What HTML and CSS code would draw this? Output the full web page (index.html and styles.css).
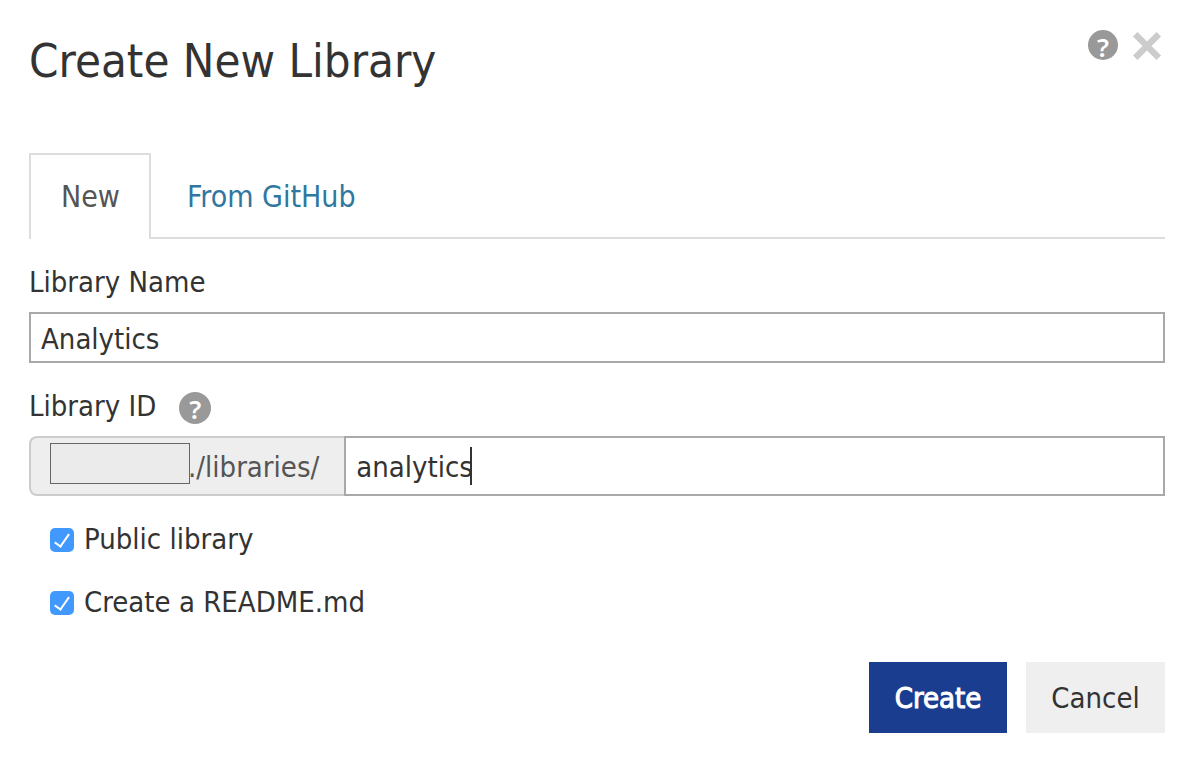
FILE: index.html
```html
<!DOCTYPE html>
<html lang="en">
<head>
<meta charset="utf-8">
<meta name="viewport" content="width=device-width, initial-scale=1">
<title>Create New Library</title>
<link rel="stylesheet" href="styles.css">
</head>
<body>
<main class="dialog">
  <header class="dialog-header">
    <h1 class="title">Create New Library</h1>
    <div class="header-actions">
      <button class="help" type="button" aria-label="Help">?</button>
      <button class="close" type="button" aria-label="Close">
        <svg class="close-icon" viewBox="0 0 28 28" aria-hidden="true"><path d="M3 3L25 25M25 3L3 25"/></svg>
      </button>
    </div>
  </header>
  <nav class="tabs">
    <a class="tab tab-active" href="#new">New</a>
    <a class="tab" href="#github">From GitHub</a>
  </nav>
  <form class="form">
    <div class="label-row"><label for="name">Library Name</label></div>
    <input class="field" id="name" type="text" value="Analytics">
    <div class="label-row">
      <label for="library-id">Library ID</label>
      <button class="help help-large" type="button" aria-label="About the library ID">?</button>
    </div>
    <div class="id-group">
      <span class="prefix"><span class="redacted"></span><span class="path">./libraries/</span></span>
      <div class="id-entry">
        <input class="field field-id" id="library-id" type="text" value="analytics">
        <span class="caret"></span>
      </div>
    </div>
    <div class="options">
      <label class="option"><input class="check" type="checkbox" checked>Public library</label>
      <label class="option"><input class="check" type="checkbox" checked>Create a README.md</label>
    </div>
    <div class="actions">
      <button class="button button-primary" type="button">Create</button>
      <button class="button" type="button">Cancel</button>
    </div>
  </form>
</main>
</body>
</html>
```
FILE: styles.css
```css
* { box-sizing: border-box; }

body {
  margin: 0;
  background: #fff;
  color: #333;
  font: 29px/36px Tahoma, "DejaVu Sans Condensed", "DejaVu Sans", sans-serif;
}

button, input { font: inherit; color: inherit; }
button { border: 0; padding: 0; cursor: pointer; }

.dialog { padding: 30px 21px 27px 29px; }

.dialog-header {
  display: flex;
  justify-content: space-between;
  align-items: flex-start;
}

.title {
  margin: 0;
  font-size: 47px;
  line-height: 62px;
  font-weight: 400;
}

.header-actions {
  display: flex;
  align-items: flex-start;
  gap: 14px;
  padding-right: 3px;
}

.help {
  width: 30px;
  height: 30px;
  border-radius: 50%;
  background: #999;
  color: #fff;
  font: 600 26px/34px "Noto Sans", "Open Sans", sans-serif;
}

.help-large {
  width: 32px;
  height: 32px;
  margin-top: 4px;
}

.close {
  display: flex;
  padding-top: 1px;
  background: none;
}

.close-icon {
  width: 30px;
  height: 30px;
  fill: none;
  stroke: #ccc;
  stroke-width: 6;
}

.tabs {
  display: flex;
  margin-top: 61px;
  border-bottom: 2px solid #ddd;
  font-size: 30px;
}

.tab {
  padding: 24px 34px 22px;
  border: 2px solid transparent;
  border-bottom: 0;
  color: #3077a0;
  text-decoration: none;
}

.tab-active {
  margin-bottom: -2px;
  padding: 24px 29px 24px 30px;
  border-color: #ddd;
  background: #fff;
  color: #555;
}

.label-row {
  display: flex;
  align-items: center;
  gap: 23px;
  margin: 25px 0 12px;
}

.field {
  display: block;
  width: 100%;
  height: 51px;
  padding: 2px 10px 0;
  border: 2px solid #a9a9a9;
  border-radius: 0;
  outline: 0;
  background: #fff;
}

.field-id { height: 60px; }

.id-group { display: flex; }

.prefix {
  display: flex;
  align-items: center;
  padding: 0 25px 0 19px;
  border: 2px solid #ccc;
  border-right: 0;
  border-radius: 8px 0 0 8px;
  background: #eee;
  color: #555;
}

.redacted {
  z-index: 1;
  width: 140px;
  height: 41px;
  margin-bottom: 5px;
  border: 1px solid #666;
  background: #ebebeb;
}

.path { margin: 2px 0 0 -2px; }

.id-entry {
  position: relative;
  flex: 1;
}

.caret {
  position: absolute;
  top: 11px;
  left: 126px;
  width: 2px;
  height: 38px;
  background: #333;
}

.options {
  display: flex;
  flex-direction: column;
  align-items: flex-start;
  gap: 27px;
  padding: 25px 21px 0;
}

.option {
  display: flex;
  align-items: center;
  gap: 10px;
}

.check {
  appearance: none;
  width: 24px;
  height: 24px;
  margin: 2px 0 0;
  border-radius: 5px;
  background: #4299fd;
  display: grid;
  place-items: center;
}

.check:checked::before {
  content: "";
  box-sizing: border-box;
  width: 8px;
  height: 16px;
  margin-bottom: 2px;
  border: solid #fff;
  border-width: 0 2px 2px 0;
  transform: rotate(35deg);
}

.actions {
  display: flex;
  justify-content: flex-end;
  gap: 19px;
  margin-top: 42px;
}

.button {
  min-width: 139px;
  height: 71px;
  background: #efefef;
}

.button-primary {
  min-width: 138px;
  background: #1a3d8f;
  color: #fff;
  -webkit-text-stroke: 1px #fff;
}
```
